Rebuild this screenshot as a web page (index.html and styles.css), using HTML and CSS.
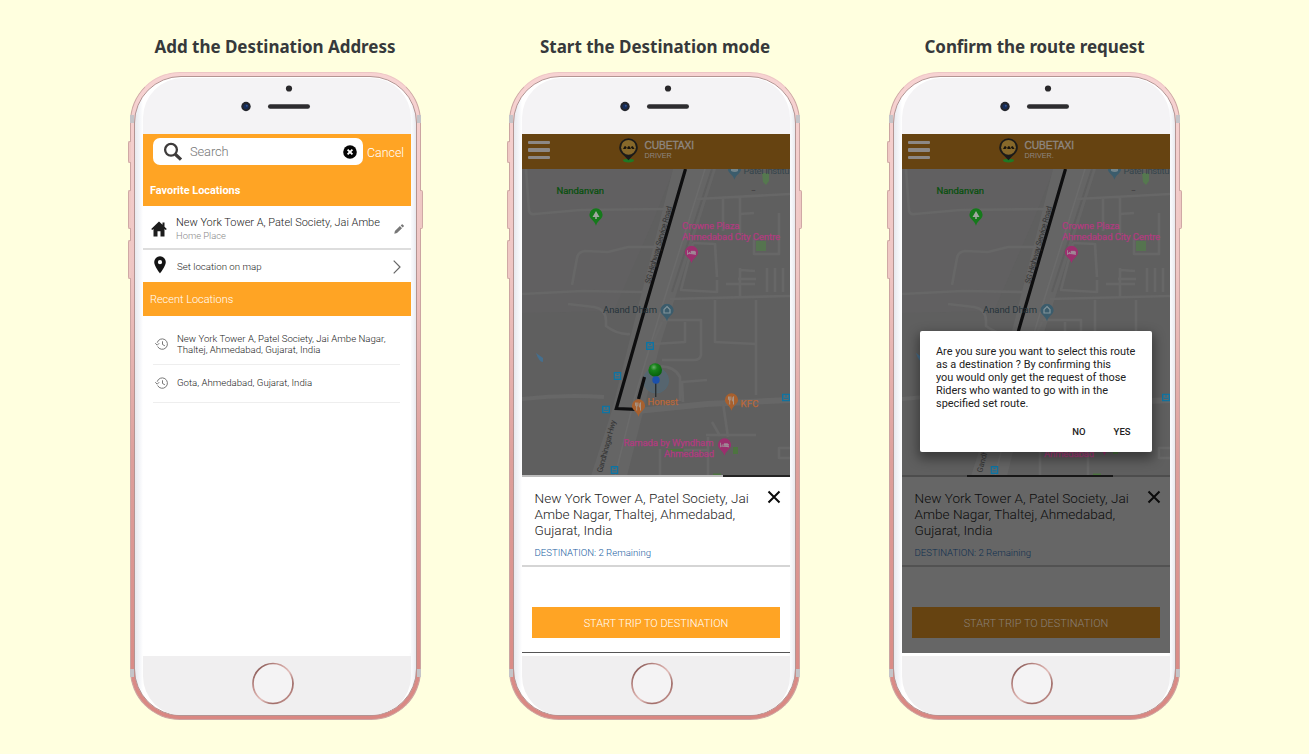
FILE: index.html
```html
<!DOCTYPE html>
<html lang="en">
<head>
<meta charset="utf-8">
<title>Destination mode</title>
<link rel="stylesheet" href="styles.css">
</head>
<body>
<svg class="defs" width="0" height="0" aria-hidden="true">
  <defs>
    <linearGradient id="ring" x1="0" y1="0" x2="1" y2="1">
      <stop offset="0" stop-color="#6d403d"/><stop offset=".3" stop-color="#c08f8b"/><stop offset=".55" stop-color="#e3bfbc"/><stop offset=".75" stop-color="#9e6a66"/><stop offset="1" stop-color="#dfb2ae"/>
    </linearGradient>
    <radialGradient id="ball" cx=".4" cy=".3" r=".7">
      <stop offset="0" stop-color="#6aae6a"/><stop offset=".35" stop-color="#17821a"/><stop offset="1" stop-color="#075f0b"/>
    </radialGradient>
    <symbol id="sensors" viewBox="13 0 268 56">
      <circle cx="159" cy="10.500" r="3.100" fill="#29282b"/>
      <circle cx="116" cy="28.500" r="4.700" fill="#24262d"/>
      <circle cx="116" cy="28.500" r="2.500" fill="#152d5c"/>
      <circle cx="116.800" cy="27.700" r="1" fill="#33528c"/>
      <rect x="138" y="26.300" width="42" height="4.400" rx="2.200" fill="#2d2c2f"/>
    </symbol>
    <symbol id="home" viewBox="0 0 268 60">
      <circle cx="130" cy="27.500" r="20" fill="#f4f3f4" stroke="url(#ring)" stroke-width="1.700"/>
    </symbol>
    <symbol id="logo" viewBox="0 0 22 26">
      <ellipse cx="10.500" cy="22.600" rx="5.500" ry="1.800" fill="#1f7a25"/>
      <path d="M10.500 .3a9.300 9.300 0 0 0-9.300 9.300c0 5.200 4.800 7.700 9.300 12.700 4.500-5 9.300-7.500 9.300-12.700A9.300 9.300 0 0 0 10.500 .3z" fill="#1c1b19"/>
      <circle cx="10.500" cy="9.300" r="7.400" fill="#86682a"/>
      <path d="M5 11l1.500-2.800h1.300l1.200 2 1.200-2h1.300l1.200 2 1-2h1.200l1.600 2.800h-2.100l-1-1.100-1.200 1.100H9.900l-1.200-1.100-1.300 1.100z" fill="#17130c"/>
    </symbol>
    <symbol id="bus" viewBox="0 0 8 8">
      <rect x=".7" y=".7" width="6.600" height="6.600" fill="#62696d" stroke="#0c74a4" stroke-width="1.400"/>
      <path d="M2 4.800h4M3 2.500h2" stroke="#0c74a4" stroke-width="1"/>
    </symbol>
    <symbol id="drop" viewBox="0 0 14 18">
      <path d="M7 .3a6.600 6.600 0 0 0-6.600 6.500c0 4.600 5 5.300 6.600 10.900 1.600-5.600 6.600-6.300 6.600-10.900A6.600 6.600 0 0 0 7 .3z"/>
    </symbol>
    <symbol id="bed" viewBox="0 0 10 6"><path d="M.5.5v5M.5 4.200h9v1.300M2 3h1.500M4.500 1.700h3.800q1.200 0 1.200 1.500H4.500z" fill="#a08c98" stroke="#a08c98" stroke-width="1"/></symbol>
    <symbol id="food" viewBox="0 0 8 9"><path d="M1 .5v2.700q0 1 1.200 1T3.400 3.200V.5M2.200.5V8.500M6 .5v8M6 .7Q4.500 2 4.800 5H6" fill="none" stroke="#a89a90" stroke-width=".9"/></symbol>
    <symbol id="roads" viewBox="522 169 268 307">
      <rect x="522" y="169" width="268" height="307" fill="#5f5f5f"/>
      <path d="M522 169h152l-20 50-40 92-92 2z" fill="#616061"/>
      <path d="M673 169h43L660 345 627 476h-36L612 410z" fill="#656565"/>
      <path d="M705 169L664 300 634 400 615 476" fill="none" stroke="#6b6b6b" stroke-width="1.600"/>
      <path d="M712 169L672 292" fill="none" stroke="#5e5e5e" stroke-width="2"/>
      <g fill="none" stroke="#676767" stroke-width="2.700" stroke-linejoin="round">
        <path d="M526 169l3 42q1 4 6 3l45-4 88-1M572 285l5-27q1-6 8-7l23 1 20-5h31M522 294l60-3 60 1M568 304l26 3q12 2 12 14v5q12 9 24 8"/>
        <path d="M697 199l93-5M723 199v32M740 196v39M740 214l14-1M779 213v41h-25v-16M693 243l22 1 2 33M693 243l-12 47 36 2v-12M670 299l120-3"/>
        <path d="M715 300v42l41 2M756 300v95M740 268v28M726 284h29M740 270l15 1M767 268v24M775 268v24M783 268v24M738 279h18"/>
        <path d="M654 344l31-2V322M654 340l8-18M663 320h38v35q-1 5-7 5h-32M653 367q20-3 27 10v24M683 402l-1-20 25-2"/>
        <path d="M522 399q42-5 82-2" stroke-width="4"/>
        <path d="M637 411l70-7 83-4" stroke-width="6"/>
        <path d="M723 403l5 34M706 435h50M720 436l-8-14M708 437v39M684 450h24M660 449v27M790 448h-11v10h11"/>
      </g>
      <path d="M756 241h10v10h-10z" fill="#55744f"/><path d="M762 173h7v8l-3 4-3-3z" fill="#55784f"/>
      <path d="M733 447h5v7h-5zM713 473.500h8v2.500h-8zM668 449h15v2h-15z" fill="#4d7440"/>
      <path d="M536 353l7 5v4q-4 0-7-9z" fill="#456f8e"/>
      <use href="#bus" x="646" y="342" width="8" height="8"/><use href="#bus" x="613.500" y="372" width="8" height="8"/><use href="#bus" x="602" y="405.500" width="8" height="8"/><use href="#bus" x="782" y="393.500" width="8" height="8"/><use href="#bus" x="610.500" y="466" width="8" height="8"/>
      <use href="#drop" x="589" y="208" width="14" height="18" fill="#157a1b"/><path d="M596 211l3.500 6h-2.700v2h-1.600v-2h-2.700z" fill="#a0a8a0"/>
      <use href="#drop" x="684.500" y="245.500" width="14" height="18" fill="#9c2f6e"/><use href="#bed" x="687" y="249.500" width="9" height="6"/>
      <use href="#drop" x="717.500" y="438" width="14" height="18" fill="#9c2f6e"/><use href="#bed" x="720" y="442" width="9" height="6"/>
      <use href="#drop" x="660" y="303.500" width="14" height="18" fill="#3b5c6c"/><path d="M667 306.500l3 3v3.500h-6v-3.500z" fill="none" stroke="#81939a" stroke-width="1.200"/>
      <use href="#drop" x="727.500" y="162" width="14" height="18" fill="#3b5c6c"/><path d="M731 169h7v2q-3 2-7 0z" fill="#72848b"/>
      <circle cx="656" cy="380.500" r="12.500" fill="#56656f" stroke="#526875"/>
      <path d="M685.500 169L641 322l-24.700 86.500 20 .8M638.500 399l6-22" fill="none" stroke="#0e0e0f" stroke-width="3.200"/>
      <path d="M655.700 378v19" stroke="#292e31" stroke-width="1.400"/>
      <circle cx="655.200" cy="370" r="6.800" fill="url(#ball)"/>
      <circle cx="656" cy="380" r="3.700" fill="#1b50ac"/>
      <use href="#drop" x="631.500" y="399" width="14" height="18" fill="#a8602e"/><use href="#food" x="634.500" y="402" width="8" height="9"/>
      <use href="#drop" x="724.500" y="393" width="14" height="18" fill="#a8602e"/><use href="#food" x="727.500" y="396" width="8" height="9"/>
    </symbol>
    <symbol id="clock" viewBox="0 0 14 12"><path d="M2.600 8.500A5.200 5.200 0 1 0 2.200 4.700M.3 5.200l1.900 2 2-2M7.500 3.300v3.200l2.400 1.300" fill="none" stroke="#777" stroke-width="1"/></symbol>
    <symbol id="close" viewBox="0 0 14 14"><path d="M1.500 1.500l11 11M12.500 1.500l-11 11" stroke="#0b0b0b" stroke-width="2"/></symbol>
  </defs>
</svg>

<main class="steps">
  <section class="step">
    <h2 class="title t1">Add the Destination Address</h2>
    <div class="phone">
      <i class="key k1"></i><i class="key k2"></i><i class="key k3"></i><i class="key k4"></i><i class="band b1"></i><i class="band b2"></i>
      <div class="plate">
        <svg class="sensors"><use href="#sensors"/></svg>
        <div class="screen">
          <div class="topbar">
            <div class="searchrow">
              <div class="search">
                <svg width="20" height="20" viewBox="0 0 20 20"><circle cx="8" cy="7.800" r="5.900" fill="none" stroke="#3e3c3c" stroke-width="2.300"/><path d="M12.300 12.200l5.700 5.400" stroke="#3e3c3c" stroke-width="3.300"/></svg>
                <span class="placeholder">Search</span>
                <svg width="14" height="14" viewBox="0 0 14 14"><circle cx="7" cy="7" r="6.800" fill="#050505"/><path d="M4.600 4.600l4.800 4.800M9.400 4.600L4.600 9.400" stroke="#fff" stroke-width="1.900"/></svg>
              </div>
              <span class="cancel">Cancel</span>
            </div>
            <div class="favtitle">Favorite Locations</div>
          </div>
          <div class="fav">
            <svg width="16" height="16" viewBox="0 0 16 16"><path d="M8 .5L.2 8l1 1L2.500 8v7.500h4V10.200h3v5.300h4V8l1.300 1 1-1-2.300-2.200V1.500h-2v2.300z" fill="#1d1d1d"/></svg>
            <div class="favtext"><div class="favname">New York Tower A, Patel Society, Jai Ambe</div><div class="favsub">Home Place</div></div>
            <svg width="10" height="10" viewBox="0 0 10 10"><path d="M.3 9.700l.6-2.800 5-4.800 2.100 2.100-5 4.800zM6.700 1.500l1-1q.5-.4 1 0l1 1q.4.500 0 1l-1 1z" fill="#777"/></svg>
          </div>
          <div class="setloc">
            <svg width="12" height="18" viewBox="0 0 12 18"><path fill-rule="evenodd" d="M6 .3a5.800 5.800 0 0 0-5.800 5.800C.2 10.400 6 17.500 6 17.500s5.800-7.100 5.800-11.400A5.800 5.800 0 0 0 6 .3zM6 4.100a2.100 2.100 0 1 1 0 4.200 2.100 2.100 0 0 1 0-4.200z" fill="#141414"/></svg>
            <span>Set location on map</span>
            <svg class="chev" width="8" height="14" viewBox="0 0 8 14"><path d="M.7.700L7 7 .7 13.300" fill="none" stroke="#666" stroke-width="1.200"/></svg>
          </div>
          <div class="rectitle">Recent Locations</div>
          <div class="recent r1"><svg width="14" height="12"><use href="#clock"/></svg><p>New York Tower A, Patel Society, Jai Ambe Nagar,<br>Thaltej, Ahmedabad, Gujarat, India</p></div>
          <div class="recent r2"><svg width="14" height="12"><use href="#clock"/></svg><p>Gota, Ahmedabad, Gujarat, India</p></div>
        </div>
        <svg class="home"><use href="#home"/></svg>
      </div>
    </div>
  </section>

  <section class="step">
    <h2 class="title t2">Start the Destination mode</h2>
    <div class="phone">
      <i class="key k1"></i><i class="key k2"></i><i class="key k3"></i><i class="key k4"></i><i class="band b1"></i><i class="band b2"></i>
      <div class="plate">
        <svg class="sensors"><use href="#sensors"/></svg>
        <div class="screen">
          <div class="appbar">
            <div class="menu"><i></i><i></i><i></i></div>
            <svg width="22" height="26"><use href="#logo"/></svg>
            <div class="brand"><div class="brand1">CUBETAXI</div><div class="brand2">DRIVER</div></div>
          </div>
          <svg class="map" viewBox="522 169 268 306">
            <use href="#roads" x="522" y="169" width="268" height="307"/>
            <g class="labels">
              <text x="743.500" y="174" textLength="46" fill="#35454c">Patel Institu</text>
              <text x="556.500" y="194" textLength="47.500" class="park">Nandanvan</text>
              <text x="751" y="191" textLength="5" fill="#333">...</text>
              <text x="682" y="229" textLength="57.500" class="hotel">Crowne Plaza</text>
              <text x="682" y="240" textLength="98" class="hotel">Ahmedabad City Centre</text>
              <text x="603" y="313" textLength="54" class="place">Anand Dham</text>
              <text x="647.500" y="404.500" textLength="30.500" class="eat">Honest</text>
              <text x="740.500" y="406.500" textLength="18" class="eat">KFC</text>
              <text x="623.500" y="445.500" textLength="90" class="hotel">Ramada by Wyndham</text>
              <text x="664" y="456.800" textLength="50" class="hotel">Ahmedabad</text>
              <text class="road" transform="translate(650 284) rotate(-74)" textLength="80">SG Highway Service Road</text>
              <text class="road" transform="translate(602 473) rotate(-75)" textLength="54">Gandhinagar Hwy</text>
            </g>
          </svg>
          <div class="progress"><i class="p2"></i></div>
          <div class="panel">
            <div class="dest"><p>New York Tower A, Patel Society, Jai<br>Ambe Nagar, Thaltej, Ahmedabad,<br>Gujarat, India</p><svg width="14" height="14"><use href="#close"/></svg></div>
            <div class="remain">DESTINATION: 2 Remaining</div>
          </div>
          <div class="actions"><div class="start">START TRIP TO DESTINATION</div></div>
        </div>
        <svg class="home"><use href="#home"/></svg>
      </div>
    </div>
  </section>

  <section class="step">
    <h2 class="title t3">Confirm the route request</h2>
    <div class="phone">
      <i class="key k1"></i><i class="key k2"></i><i class="key k3"></i><i class="key k4"></i><i class="band b1"></i><i class="band b2"></i>
      <div class="plate">
        <svg class="sensors"><use href="#sensors"/></svg>
        <div class="screen dimmed">
          <div class="appbar">
            <div class="menu"><i></i><i></i><i></i></div>
            <svg width="22" height="26"><use href="#logo"/></svg>
            <div class="brand"><div class="brand1">CUBETAXI</div><div class="brand2">DRIVER.</div></div>
          </div>
          <svg class="map" viewBox="522 169 268 306">
            <use href="#roads" x="522" y="169" width="268" height="307"/>
            <g class="labels">
              <text x="743.500" y="174" textLength="46" fill="#35454c">Patel Institu</text>
              <text x="556.500" y="194" textLength="47.500" class="park">Nandanvan</text>
              <text x="751" y="191" textLength="5" fill="#333">...</text>
              <text x="682" y="229" textLength="57.500" class="hotel">Crowne Plaza</text>
              <text x="682" y="240" textLength="98" class="hotel">Ahmedabad City Centre</text>
              <text x="603" y="313" textLength="54" class="place">Anand Dham</text>
              <text x="664" y="456.800" textLength="50" class="hotel">Ahmedabad</text>
              <text class="road" transform="translate(650 284) rotate(-74)" textLength="80">SG Highway Service Road</text>
              <text class="road" transform="translate(602 473) rotate(-75)">Gandhi</text>
            </g>
          </svg>
          <div class="progress"><i class="p3"></i></div>
          <div class="panel">
            <div class="dest"><p>New York Tower A, Patel Society, Jai<br>Ambe Nagar, Thaltej, Ahmedabad,<br>Gujarat, India</p><svg width="14" height="14"><use href="#close"/></svg></div>
            <div class="remain">DESTINATION: 2 Remaining</div>
          </div>
          <div class="actions"><div class="start">START TRIP TO DESTINATION</div></div>
          <div class="dialog">
            <p>Are you sure you want to select this route<br>as a destination ? By confirming this<br>you would only get the request of those<br>Riders who wanted to go with in the<br>specified set route.</p>
            <div class="choices"><span>NO</span><span>YES</span></div>
          </div>
        </div>
        <svg class="home"><use href="#home"/></svg>
      </div>
    </div>
  </section>
</main>
</body>
</html>
```
FILE: styles.css
```css
* { box-sizing: border-box; }
body { margin: 0; height: 754px; overflow: hidden; background: #ffffdf; font-family: Roboto, "Liberation Sans", sans-serif; }
p, h2 { margin: 0; }
svg { display: block; flex: none; }
.defs { position: absolute; }
.steps { display: flex; gap: 88px; padding: 34px 0 0 130px; }
.step { width: 291px; flex: none; }
.step:last-child { margin-left: 1px; }
.title { height: 38px; font: 700 17px/26px "Noto Sans", "Open Sans", sans-serif; color: #36393b; text-align: center; white-space: nowrap; letter-spacing: -.03px; }
.t1 { padding-right: 1px; }
.t2 { padding-left: 1px; }
.t3 { letter-spacing: -.08px; }

.phone { position: relative; width: 291px; height: 648px; padding: 3px; border-radius: 50px; background: linear-gradient(#f7d3d2, #efc6c4 30%, #dd9f9b 60%, #d98782); border: 1px solid #cba5a2; border-top-color: #edc6c5; }
.key { position: absolute; width: 3px; border-radius: 2px 0 0 2px; background: #efc8c4; border: 1px solid #cfa9a5; border-right: 0; left: -3px; }
.k1 { top: 68px; height: 22px; }
.k2 { top: 117px; height: 39px; }
.k3 { top: 167px; height: 39px; }
.k4 { top: 117px; height: 39px; left: auto; right: -3px; transform: scaleX(-1); }
.band { position: absolute; left: -1px; right: -1px; height: 8px; border: solid #c5c4c8; border-width: 0 4px; }
.b1 { top: 42px; }
.b2 { top: 596px; }
.plate { position: relative; height: 640px; border-radius: 47px; border: 1px solid #b39492; background: linear-gradient(90deg, #e8e9ee 0, #f5f6f9 5px, #fff 8px, #fff 274px, #f5f6f9 278px, #e8e9ee 100%); overflow: hidden; padding: 1px 0 3px 8px; }
.sensors { width: 268px; height: 56px; background: #f4f3f5; border-radius: 40px 40px 0 0; overflow: hidden; }
.screen { position: relative; width: 268px; height: 519px; background: #fff; }
.home { width: 268px; height: 60px; margin-top: 3px; background: #f0eff0; border-radius: 0 0 40px 40px; }

.topbar { height: 72px; background: #ffa424; padding: 4px 0 0 10px; color: #fff; }
.searchrow { display: flex; align-items: center; }
.search { display: flex; align-items: center; width: 210px; height: 27px; border-radius: 7px; background: #fff; padding: 0 6px 0 10px; }
.placeholder { flex: 1; padding: 0 0 0 7px; font-size: 12.900px; font-weight: 300; color: #777; letter-spacing: -.1px; }
.cancel { margin-left: 4px; padding-top: 1px; font-size: 12.400px; font-weight: 300; }
.favtitle { margin: 18px 0 0 -3px; font-size: 10.900px; line-height: 16px; font-weight: 700; }
.fav { height: 44px; display: flex; align-items: center; padding: 4px 7px 0 8px; border-bottom: 2px solid #ddd; }
.favtext { flex: 1; padding-left: 9px; white-space: nowrap; }
.favname { font-size: 10.960px; line-height: 14px; color: #222; font-weight: 300; }
.favsub { font-size: 9.400px; line-height: 12px; color: #888; font-weight: 300; }
.setloc { height: 32px; display: flex; align-items: center; padding: 0 10px 2px 11px; font-size: 9.680px; font-weight: 300; color: #222; }
.setloc span { flex: 1; padding: 3px 0 0 11px; }
.chev { margin-top: 3px; }
.rectitle { height: 34px; line-height: 36px; background: #ffa424; color: #fff; font-size: 10.960px; font-weight: 300; padding-left: 7px; }
.recent { margin: 0 11px 0 10px; display: flex; align-items: center; border-bottom: 1px solid #eee; font-size: 9.640px; line-height: 11px; font-weight: 300; color: #222; white-space: nowrap; padding-left: 2px; }
.recent p { padding-left: 8px; }
.r1 { height: 49px; padding-top: 7px; }
.r2 { height: 38px; padding-bottom: 2px; }

.appbar { height: 35px; background: #664311; display: flex; align-items: flex-start; padding: 4px 6px 0; }
.menu { width: 22px; padding-top: 3px; display: flex; flex-direction: column; gap: 4px; }
.menu i { height: 3.300px; border-radius: 1px; background: #8c8886; }
.appbar > svg { margin-left: 68px; }
.brand { padding: 2px 0 0 4.500px; font-family: "Liberation Sans", sans-serif; color: #8e8781; }
.brand1 { font-size: 10.200px; line-height: 12px; letter-spacing: -.1px; -webkit-text-stroke: .3px; }
.brand2 { font-size: 7.200px; line-height: 7px; }
.map { width: 268px; height: 306px; }
.labels { font: 400 9.500px Roboto, sans-serif; }
.park { fill: #06500c; stroke: #06500c; stroke-width: .2px; }
.hotel { fill: #b03c80; stroke: #b03c80; stroke-width: .25px; }
.eat { fill: #b9683a; stroke: #b9683a; stroke-width: .25px; }
.place { fill: #26343b; }
.road { font-size: 7.800px; fill: #333; }
.progress { height: 2px; background: #bdbdbd; display: flex; }
.p2 { margin-left: 201px; width: 67px; background: #242424; }
.p3 { margin-left: 65px; width: 146px; background: #171717; }
.panel { height: 90px; border-bottom: 2px solid #d5d5d5; padding: 13px 9.500px 0 12.500px; }
.dest { display: flex; justify-content: space-between; font-size: 13.580px; line-height: 16px; color: #222; font-weight: 300; white-space: nowrap; }
.remain { font-size: 9.600px; line-height: 14px; margin-top: 7.500px; color: #22609f; font-weight: 300; }
.actions { height: 86px; padding: 40px 10px 0; border-bottom: 1px solid #555; }
.start { height: 31px; line-height: 33px; text-align: center; background: #ffa424; color: #fff; font-size: 10.940px; font-weight: 300; }
.dimmed { background: #666; }
.dimmed .progress { background: #4d4d4d; }
.dimmed .panel { border-bottom-color: #525252; }
.dimmed .dest { color: #0c0c0c; }
.dimmed .remain { color: #0f2f50; }
.dimmed .actions { border-bottom-color: #666; }
.dimmed .start { background: #664311; color: #8a8178; }
.dialog { position: absolute; left: 18px; top: 197px; width: 232px; height: 121px; border-radius: 2px; background: #fff; padding: 14px 16px; box-shadow: 0 5px 12px 2px rgba(0,0,0,.4); color: #222; font-size: 10.920px; line-height: 13px; white-space: nowrap; }
.choices { display: flex; justify-content: flex-end; gap: 28px; padding: 15px 5.500px 0 0; font-size: 9.500px; font-weight: 500; }
```
